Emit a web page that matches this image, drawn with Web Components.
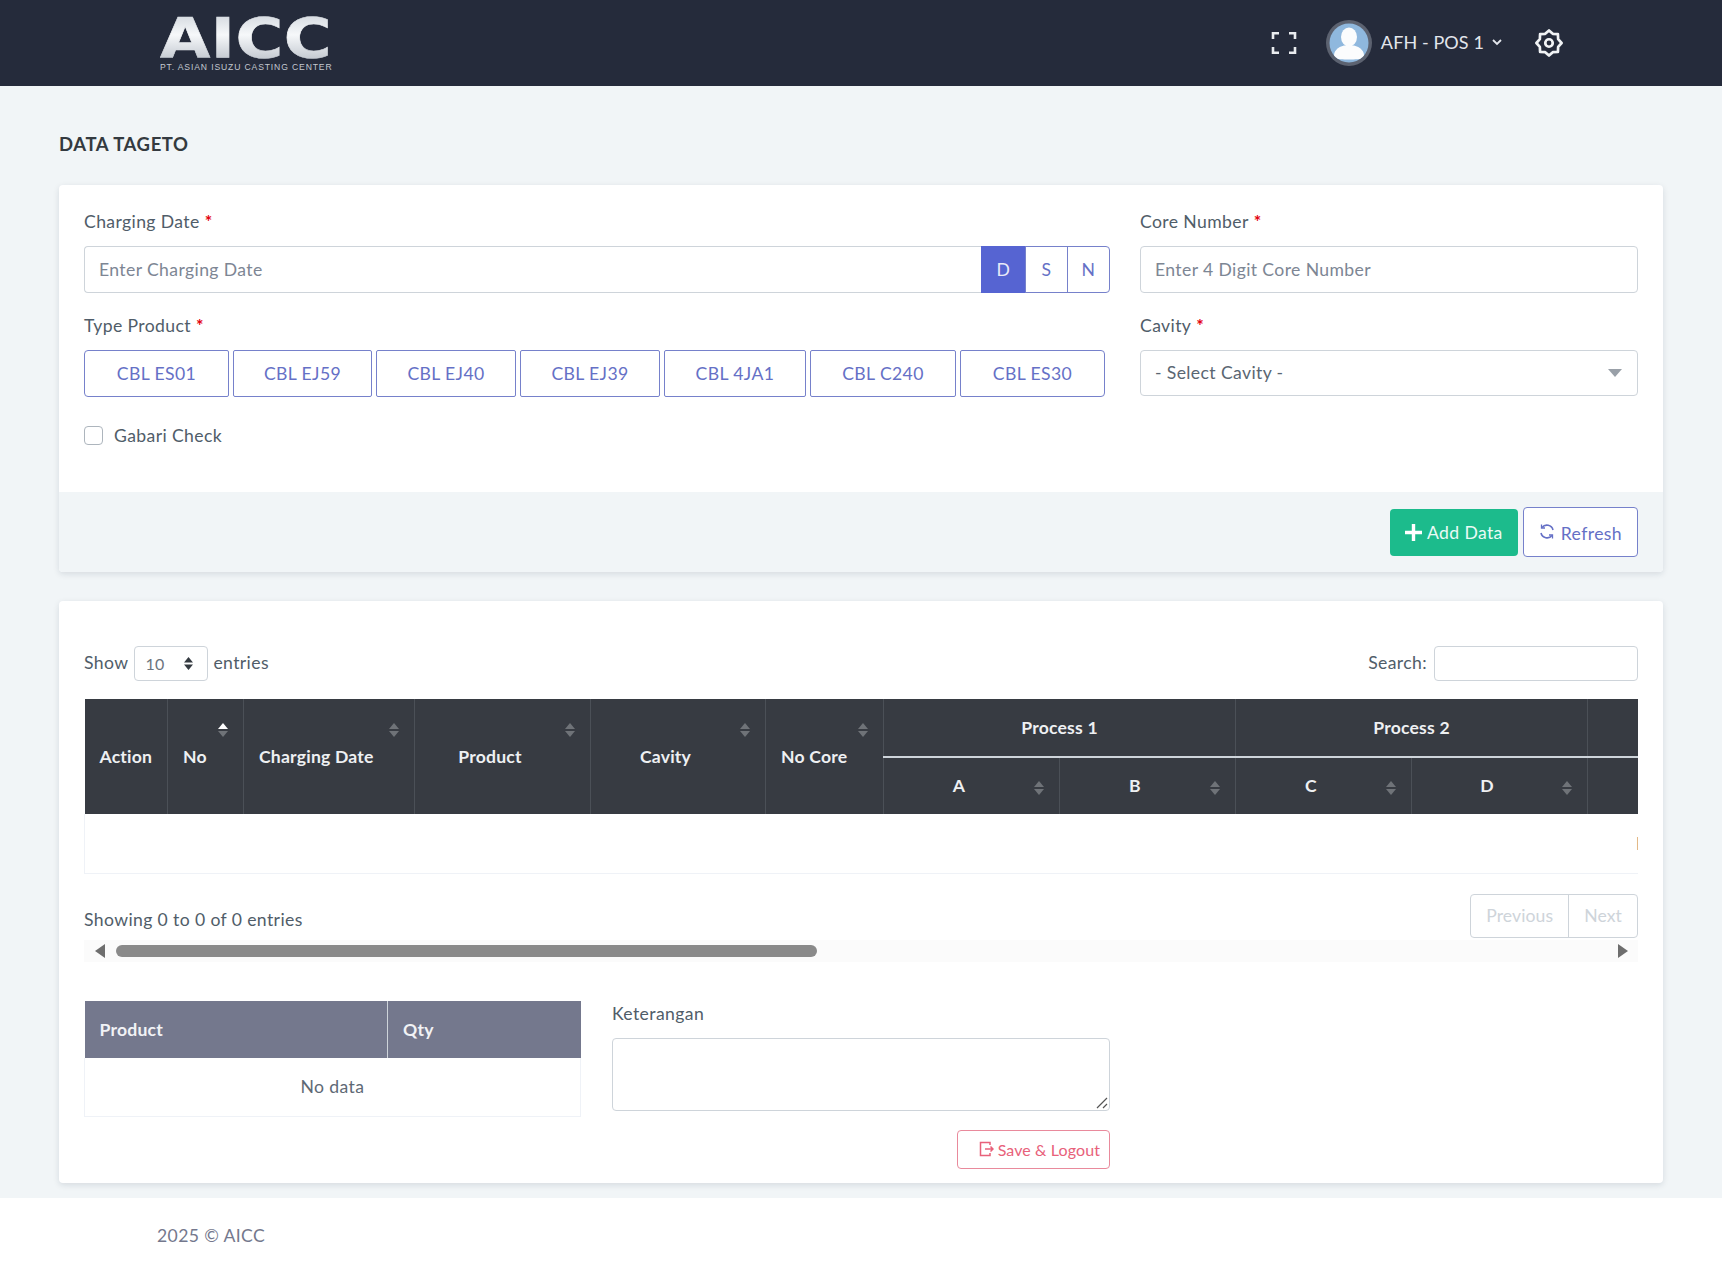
<!DOCTYPE html>
<html lang="en">
<head>
<meta charset="utf-8">
<title>DATA TAGETO</title>
<style>
  html, body { margin: 0; padding: 0; background: #f1f5f7; }
  body { font-family: "Lato", "Open Sans", sans-serif; font-size: 17.6px; letter-spacing: .38px; color: #505d69; overflow: hidden; }
  main { display: block; padding: 0 59px; }
</style>
</head>
<body>
<app-header></app-header>
<main>
  <page-title>DATA TAGETO</page-title>
  <charging-form></charging-form>
  <entries-card></entries-card>
</main>
<app-footer>2025 © AICC</app-footer>

<script>
// shared bits of css for form controls
const controlCss = `
  * { box-sizing: border-box; }
  .control {
    display: flex;
    align-items: center;
    background: #fff;
    border: 1px solid #ced4da;
    border-radius: 4px;
    padding: 0 14px;
    color: #74788d;
    font-size: 17.6px;
  }
`;

// eight pointed outline of the settings icon
function gearPath() {
  const pts = [];
  for (let i = 0; i < 16; i++) {
    const r = i % 2 ? 8.5 : 10.8;
    const a = (i * Math.PI) / 8 - Math.PI / 2;
    pts.push((12 + r * Math.cos(a)).toFixed(2) + " " + (12 + r * Math.sin(a)).toFixed(2));
  }
  return "M" + pts.join("L") + "z";
}

class AppHeader extends HTMLElement {
  constructor() {
    super();
    this.attachShadow({ mode: "open" });
    this.shadowRoot.innerHTML = `
      <style>
        :host { display: flex; align-items: center; height: 86px; background: #252b3b; color: #e9ecef; padding: 0 0 0 160px; box-sizing: border-box; }
        .logo { display: block; width: 172px; height: 76px; }
        .tools { margin-left: auto; display: flex; align-items: center; padding-right: 159px; }
        .user { font-size: 18px; margin: 0 0 2px 9px; color: #e3e6ec; letter-spacing: .1px; }
        .full { margin-right: 29px; display: block; }
        .avatar { display: block; }
        .chev { margin: 0 30px 2px 5px; display: block; }
      </style>
      <svg class="logo" viewBox="0 0 172 76">
        <defs>
          <linearGradient id="lg" x1="0" y1="0" x2="0" y2="1">
            <stop offset="0" stop-color="#c6ccd4"/><stop offset=".45" stop-color="#f6f8fa"/><stop offset="1" stop-color="#aeb5bf"/>
          </linearGradient>
        </defs>
        <text x="0" y="52" font-family="DejaVu Sans" font-weight="700" font-size="55" fill="url(#lg)" stroke="url(#lg)" stroke-width=".6" textLength="172" lengthAdjust="spacingAndGlyphs">AICC</text>
        <text x="0" y="65" font-family="Liberation Sans" font-size="8.6" fill="#c3c8d0" textLength="172" lengthAdjust="spacing">PT. ASIAN ISUZU CASTING CENTER</text>
      </svg>
      <div class="tools">
        <svg class="full" width="26" height="24" viewBox="0 0 26 24" fill="none" stroke="#e9ecef" stroke-width="2.6">
          <path d="M2 8V2.3h6M18 2.3h6V8M24 16v5.7h-6M8 21.700H2V16"/>
        </svg>
        <svg class="avatar" width="46" height="46" viewBox="0 0 46 46">
          <circle cx="23" cy="23" r="23" fill="#5c6270"/>
          <clipPath id="cl"><circle cx="23" cy="23" r="19.500"/></clipPath>
          <circle cx="23" cy="23" r="19.500" fill="#8fb8de"/>
          <g clip-path="url(#cl)" fill="#fbfcfd">
            <ellipse cx="23" cy="17" rx="8" ry="9.500"/>
            <path d="M8 38c-1-7 4-11 10-12.500h10C34 27 39 31 38 38c-6 2-24 2-30 0z"/>
          </g>
        </svg>
        <span class="user">AFH - POS 1</span>
        <svg class="chev" width="16" height="16" viewBox="0 0 16 16" fill="none" stroke="#e3e6ec" stroke-width="1.800"><path d="M4 6l4 4 4-4"/></svg>
        <svg width="28" height="28" viewBox="0 0 24 24" fill="none" stroke="#f1f3f5" stroke-width="2.300" stroke-linejoin="round">
          <path d="${gearPath()}"/>
          <circle cx="12" cy="12" r="3.200"/>
        </svg>
      </div>`;
  }
}

class PageTitle extends HTMLElement {
  constructor() {
    super();
    this.attachShadow({ mode: "open" }).innerHTML = `
      <style>
        :host { display: block; padding: 47px 0 29px; font-weight: 700; font-size: 18.500px; line-height: 23px; letter-spacing: .6px; color: #343a40; }
      </style>
      <slot></slot>`;
  }
}

class FieldLabel extends HTMLElement {
  constructor() {
    super();
    this.attachShadow({ mode: "open" }).innerHTML = `
      <style>
        :host { display: block; height: 22px; line-height: 22px; font-size: 17.6px; color: #505d69; }
        b { color: #e3000f; font-weight: 700; margin-left: 5px; }
      </style>
      <slot></slot>${this.hasAttribute("required") ? "<b>*</b>" : ""}`;
  }
}

class ProductButton extends HTMLElement {
  constructor() {
    super();
    this.attachShadow({ mode: "open" }).innerHTML = `
      <style>
        :host { display: flex; align-items: center; justify-content: center; height: 47px; box-sizing: border-box; border: 1px solid #7681cb; color: #6570c6; font-size: 17.6px; background: #fff; border-radius: 2px; flex: none; }
      </style>
      <slot></slot>`;
  }
}

class ChargingForm extends HTMLElement {
  constructor() {
    super();
    const products = [
      ["CBL ES01", 145], ["CBL EJ59", 139], ["CBL EJ40", 140], ["CBL EJ39", 140],
      ["CBL 4JA1", 142], ["CBL C240", 146], ["CBL ES30", 145],
    ];
    this.attachShadow({ mode: "open" }).innerHTML = `
      <style>
        ${controlCss}
        :host { display: block; background: #fff; border-radius: 4px; box-shadow: 0 2px 6px rgba(15,34,58,.12); height: 387px; }
        .body { display: grid; grid-template-columns: 1026px 1fr; column-gap: 30px; padding: 26px 25px 0; height: 307px; align-content: start; }
        .gap { margin-top: 13px; }
        .row2 { margin-top: 22px; }
        .date { height: 47px; display: flex; }
        .date .control { flex: 1; border-radius: 4px 0 0 4px; border-right: 0; color: #7d8694; }
        .shift { display: flex; align-items: center; justify-content: center; width: 43px; border: 1px solid #7681cb; margin-left: -1px; color: #6570c6; }
        .shift.on { background: #5664d2; border-color: #5664d2; color: #e8eaf8; width: 45px; margin-left: 0; }
        .shift.last { border-radius: 0 4px 4px 0; }
        .input { height: 47px; color: #7d8694; }
        .products { display: flex; gap: 4px; }
        product-button:first-child { border-radius: 4px 2px 2px 4px; }
        product-button:last-child { border-radius: 2px 4px 4px 2px; }
        .select { height: 46px; color: #5a6672; justify-content: space-between; padding-bottom: 2px; }
        .caret { width: 0; height: 0; margin: 2px 1px 0 0; border: 7px solid transparent; border-top: 8px solid #99a0a8; border-bottom: 0; }
        .check { grid-column: 1; display: flex; align-items: center; gap: 11px; margin-top: 28px; height: 20px; }
        .box { width: 19px; height: 19px; border: 1px solid #adb5bd; border-radius: 4px; }
        .foot { height: 80px; background: #f1f5f7; display: flex; justify-content: flex-end; align-items: center; gap: 5px; padding: 0 25px; border-radius: 0 0 4px 4px; }
        .add { display: flex; align-items: center; gap: 5px; height: 47px; padding: 0 15px; background: #1cbb8c; color: #eafaf5; border-radius: 4px; }
        .refresh { display: flex; align-items: center; gap: 6px; height: 50px; padding: 2px 15px 0; border: 1px solid #7681cb; border-radius: 4px; color: #6570c6; background: #fff; }
        .refresh svg { margin-top: -4px; }
        svg { display: block; }
      </style>
      <div class="body">
        <div>
          <field-label required>Charging Date</field-label>
          <div class="date gap">
            <div class="control">Enter Charging Date</div>
            <div class="shift on">D</div>
            <div class="shift">S</div>
            <div class="shift last">N</div>
          </div>
        </div>
        <div>
          <field-label required>Core Number</field-label>
          <div class="control input gap">Enter 4 Digit Core Number</div>
        </div>
        <div class="row2">
          <field-label required>Type Product</field-label>
          <div class="products gap">
            ${products.map(([name, w]) => `<product-button style="width:${w}px">${name}</product-button>`).join("")}
          </div>
        </div>
        <div class="row2">
          <field-label required>Cavity</field-label>
          <div class="control select gap"><span>- Select Cavity -</span><span class="caret"></span></div>
        </div>
        <div class="check"><span class="box"></span><span>Gabari Check</span></div>
      </div>
      <div class="foot">
        <div class="add">
          <svg width="17" height="17" viewBox="0 0 17 17" fill="#fff"><path d="M6.800 0h3.400v6.800H17v3.400h-6.800V17H6.800v-6.800H0V6.800h6.800z"/></svg>
          Add Data
        </div>
        <div class="refresh">
          <svg width="16" height="17" viewBox="0 0 16 17" fill="none" stroke="#6570c6" stroke-width="1.600">
            <path d="M3 4.500A6.300 6.300 0 0 1 14 7M13 12.500A6.300 6.300 0 0 1 2 10"/>
            <path d="M2.500 1.500v3.500H6M13.500 15.500V12H10" stroke-width="1.300"/>
          </svg>
          Refresh
        </div>
      </div>`;
  }
}

class SortIcon extends HTMLElement {
  constructor() {
    super();
    const up = this.hasAttribute("active") ? "#fff" : "#6f7378";
    this.attachShadow({ mode: "open" }).innerHTML = `
      <style>
        :host { position: absolute; right: 15px; display: block; width: 10px; height: 14px; }
        svg { display: block; }
      </style>
      <svg width="10" height="14" viewBox="0 0 10 14"><path d="M5 0l5 6H0z" fill="${up}"/><path d="M5 14l5-6H0z" fill="#6f7378"/></svg>`;
  }
}

class DataGrid extends HTMLElement {
  constructor() {
    super();
    // table is much wider than the card, the wrapper clips it like the scroll area does
    const widths = [83, 76, 171, 176, 175, 118];
    for (let i = 0; i < 13; i++) widths.push(176);
    widths.push(205);
    const restGroups = 5;
    const restSubs = 10;
    this.attachShadow({ mode: "open" }).innerHTML = `
      <style>
        :host { display: block; overflow: hidden; margin-top: 18px; }
        * { box-sizing: border-box; }
        table { table-layout: fixed; width: 3292px; border-collapse: collapse; font-size: 17.6px; }
        th { background: #373b42; color: #eef0f2; font-weight: 700; letter-spacing: .2px; position: relative; padding: 0 15px; border-left: 1px solid #4b5057; text-align: left; height: 57px; }
        th.first { border-left: 0; }
        .r2 { height: 115px; }
        .r2 sort-icon { top: 24px; }
        .mid { text-align: center; padding-right: 40px; }
        .group { text-align: center; border-bottom: 2px solid #ced4da; height: 58px; }
        .sub { height: 57px; padding: 0 40px 2px 15px; text-align: center; }
        .sub sort-icon { top: 23px; }
        .peek { padding-left: 50px; text-align: left; }
        .peek span { display: inline-block; width: 12px; height: 12px; background: #8fc3d6; vertical-align: middle; }
        td { height: 59px; padding-left: 15px; text-align: center; border-bottom: 1px solid #eff2f7; border-left: 1px solid #eff2f7; color: #505d69; background: #fff; }
      </style>
      <table>
        <colgroup>${widths.map((w) => `<col style="width:${w}px">`).join("")}</colgroup>
        <thead>
          <tr>
            <th class="r2 first" rowspan="2">Action</th>
            <th class="r2" rowspan="2">No<sort-icon active></sort-icon></th>
            <th class="r2" rowspan="2">Charging Date<sort-icon></sort-icon></th>
            <th class="r2 mid" rowspan="2">Product<sort-icon></sort-icon></th>
            <th class="r2 mid" rowspan="2">Cavity<sort-icon></sort-icon></th>
            <th class="r2" rowspan="2">No Core<sort-icon></sort-icon></th>
            <th class="group" colspan="2">Process 1</th>
            <th class="group" colspan="2">Process 2</th>
            <th class="group peek" colspan="2"><span></span></th>
            ${'<th class="group" colspan="2"></th>'.repeat(restGroups - 1)}
          </tr>
          <tr>
            ${["A", "B", "C", "D"].map((n) => `<th class="sub">${n}<sort-icon></sort-icon></th>`).join("")}
            ${'<th class="sub"></th>'.repeat(restSubs)}
          </tr>
        </thead>
        <tbody>
          <tr><td colspan="20">No data available in table</td></tr>
        </tbody>
      </table>`;
  }
}

class EntriesCard extends HTMLElement {
  constructor() {
    super();
    this.attachShadow({ mode: "open" }).innerHTML = `
      <style>
        ${controlCss}
        :host { display: block; box-sizing: border-box; background: #fff; border-radius: 4px; box-shadow: 0 2px 6px rgba(15,34,58,.12); margin-top: 29px; height: 582px; padding: 45px 25px 0; }
        svg { display: block; }
        .top { display: flex; justify-content: space-between; align-items: center; height: 35px; }
        .top > div { display: flex; align-items: center; gap: 5px; margin-top: -2px; }
        .len { width: 74px; height: 35px; margin: 2px 0 0 1px; justify-content: space-between; padding: 0 14px 0 10px; color: #6c7580; font-size: 16px; }
        .find { width: 204px; height: 35px; margin-left: 2px; margin-top: 2px; }
        .info { display: flex; justify-content: space-between; align-items: flex-start; height: 46px; margin-top: 20px; }
        .info span { margin-top: 15px; line-height: 22px; }
        .pages { display: flex; height: 44px; border: 1px solid #ced4da; border-radius: 4px; color: #ced4da; letter-spacing: .1px; }
        .pages div { display: flex; align-items: center; padding: 0 15px; }
        .pages div + div { border-left: 1px solid #ced4da; }
        .scroll { position: relative; display: flex; align-items: center; justify-content: space-between; height: 22px; background: #fbfbfb; padding: 0 9px 0 10px; }
        .thumb { position: absolute; left: 32px; width: 701px; height: 12px; border-radius: 6px; background: #8a8a8a; }
        .lower { display: grid; grid-template-columns: 497px 498px; column-gap: 31px; margin-top: 39px; align-items: start; }
        table { width: 497px; table-layout: fixed; border-collapse: collapse; }
        th { height: 57px; background: #74788d; color: #f1f2f5; text-align: left; padding: 0 15px; font-weight: 700; letter-spacing: .2px; }
        th + th { border-left: 1px solid #ced4da; }
        td { height: 59px; text-align: center; border: 1px solid #eff2f7; border-top: 0; color: #5e6975; }
        .note { padding-top: 2px; }
        .area { position: relative; height: 73px; margin-top: 13px; }
        .grip { position: absolute; right: 1px; bottom: 1px; }
        .save { display: flex; align-items: center; gap: 4px; width: 153px; height: 39px; margin: 19px 0 0 auto; justify-content: flex-end; padding-right: 9px; border: 1px solid #e98a9c; border-radius: 4px; color: #e8617a; font-size: 16px; letter-spacing: .1px; }
      </style>
      <div class="top">
        <div>Show
          <div class="control len"><span>10</span><sort-mini></sort-mini></div>
          entries</div>
        <div>Search:<div class="control find"></div></div>
      </div>
      <data-grid></data-grid>
      <div class="info">
        <span>Showing 0 to 0 of 0 entries</span>
        <div class="pages"><div>Previous</div><div>Next</div></div>
      </div>
      <div class="scroll">
        <svg width="11" height="14" viewBox="0 0 11 14"><path d="M11 0v14L1 7z" fill="#6e6e6e"/></svg>
        <div class="thumb"></div>
        <svg width="11" height="14" viewBox="0 0 11 14"><path d="M0 0v14l10-7z" fill="#6e6e6e"/></svg>
      </div>
      <div class="lower">
        <table>
          <colgroup><col style="width:303px"><col></colgroup>
          <tr><th>Product</th><th>Qty</th></tr>
          <tr><td colspan="2">No data</td></tr>
        </table>
        <div class="note">
          <field-label>Keterangan</field-label>
          <div class="control area">
            <svg class="grip" width="12" height="12" viewBox="0 0 12 12" stroke="#555" stroke-width="1.200"><path d="M1 11L11 1M7 11l4-4"/></svg>
          </div>
          <div class="save">
            <svg width="15" height="16" viewBox="0 0 15 16" fill="none" stroke="#e8617a" stroke-width="1.500">
              <path d="M11 4V1.500H1.500v13H11V12M6 8h8M11.500 5.500L14 8l-2.500 2.500"/>
            </svg>
            Save &amp; Logout
          </div>
        </div>
      </div>`;
  }
}

class SortMini extends HTMLElement {
  constructor() {
    super();
    this.attachShadow({ mode: "open" }).innerHTML = `
      <style>:host { display: block; width: 9px; height: 13px; } svg { display: block; }</style>
      <svg width="9" height="13" viewBox="0 0 9 13"><path d="M4.500 0L9 5.500H0zM4.500 13L9 7.500H0z" fill="#343a40"/></svg>`;
  }
}

class AppFooter extends HTMLElement {
  constructor() {
    super();
    this.attachShadow({ mode: "open" }).innerHTML = `
      <style>
        :host { display: flex; align-items: center; height: 73px; margin-top: 15px; padding: 1px 0 0 157px; background: #fff; color: #74788d; font-size: 17.6px; box-sizing: border-box; }
      </style>
      <slot></slot>`;
  }
}

customElements.define("app-header", AppHeader);
customElements.define("page-title", PageTitle);
customElements.define("field-label", FieldLabel);
customElements.define("product-button", ProductButton);
customElements.define("charging-form", ChargingForm);
customElements.define("sort-icon", SortIcon);
customElements.define("sort-mini", SortMini);
customElements.define("data-grid", DataGrid);
customElements.define("entries-card", EntriesCard);
customElements.define("app-footer", AppFooter);
</script>
</body>
</html>
